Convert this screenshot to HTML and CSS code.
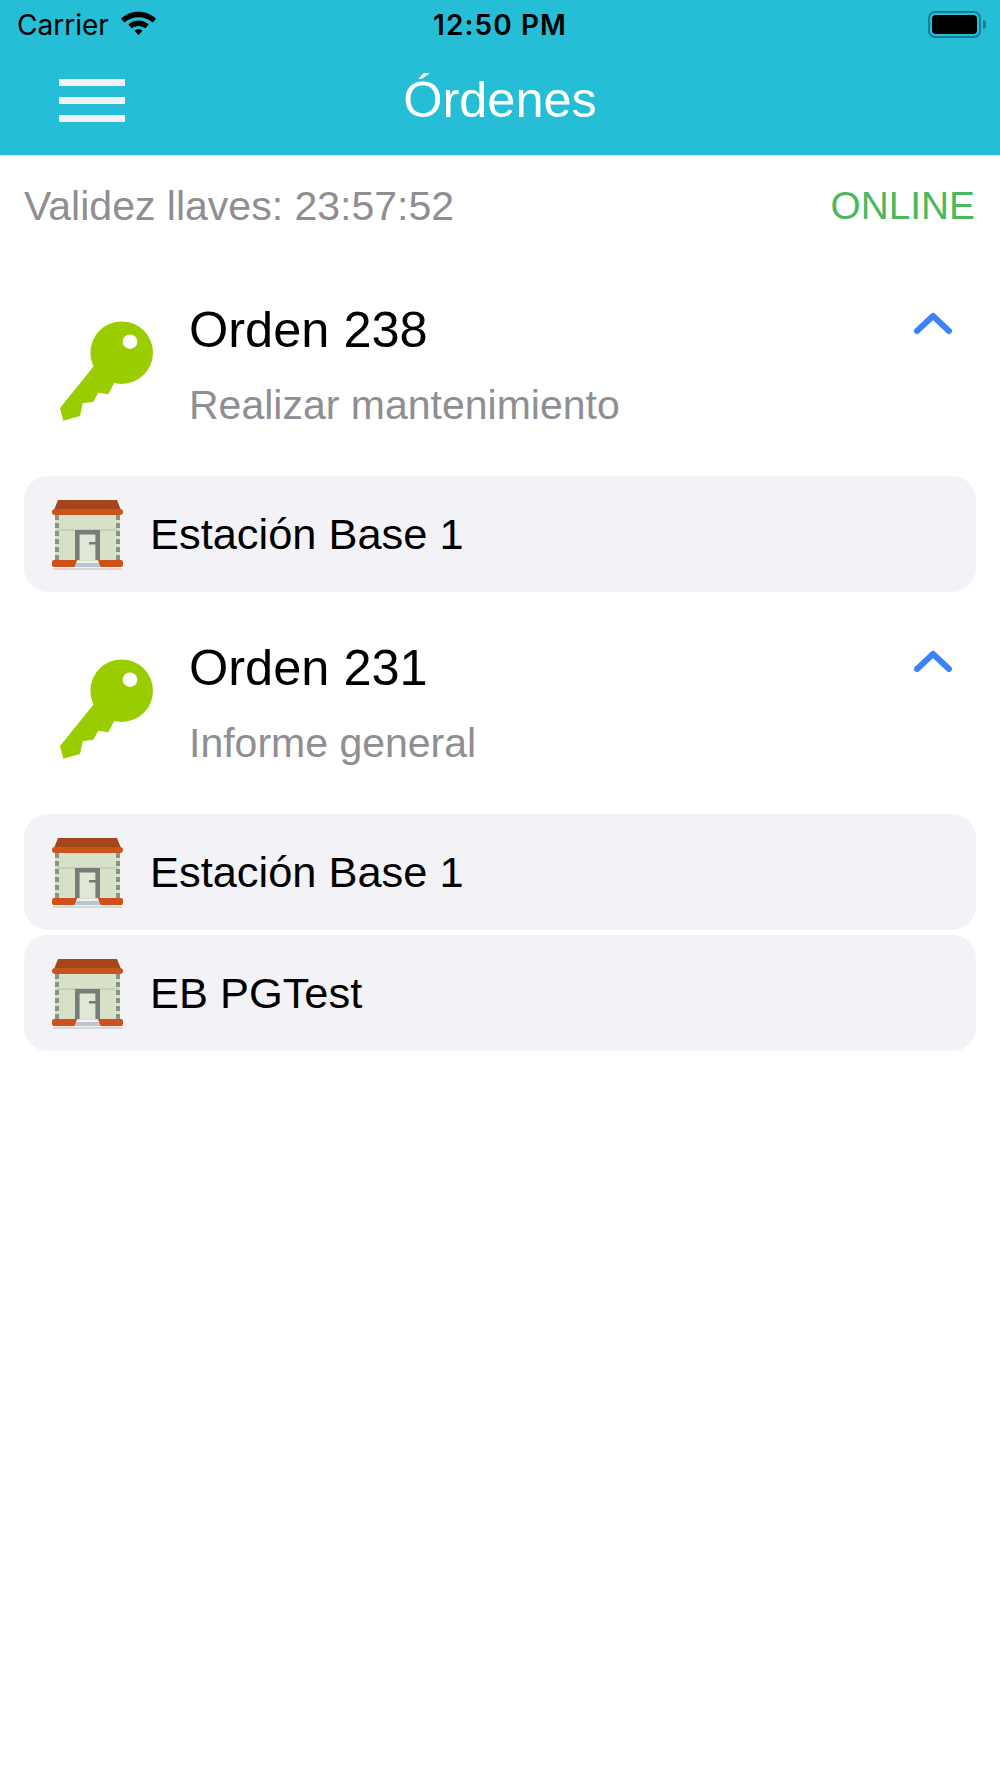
FILE: index.html
```html
<!DOCTYPE html>
<html lang="es">
<head>
<meta charset="utf-8">
<title>Órdenes</title>
<link rel="stylesheet" href="styles.css">
</head>
<body>
<svg class="defs" width="0" height="0" aria-hidden="true">
  <defs>
    <symbol id="key" viewBox="0 -1 94 101">
      <path fill="#9acd00" d="M61.700 -0.600A31.300 31.300 0 1 1 61.700 62A31.300 31.300 0 1 1 61.700 -0.600ZM33.300 44.700L60 50L54 61.300L48.300 72.300L38.300 70.700L33.300 79.700L22.700 81.300L20 94L3.300 98.700L0 86ZM70 12.400A7.300 7.300 0 1 0 70 27A7.300 7.300 0 1 0 70 12.400Z"/>
    </symbol>
    <symbol id="house" viewBox="0 0 76 76">
      <rect x="7" y="17" width="65" height="48" fill="#d6e1c8"/>
      <rect x="9" y="33" width="61" height="2" fill="#c3d0b4"/>
      <path d="M9 19v45M70 19v45" stroke="#8d9282" stroke-width="4" stroke-dasharray="5 3"/>
      <path d="M10 4H69L73 14H6Z" fill="#a5451b"/>
      <rect x="4" y="13" width="71" height="6" rx="3" fill="#c9551d"/>
      <path d="M29.300 64V36.300H49.700V64" fill="#dfe8d6" stroke="#767c78" stroke-width="4.600"/>
      <rect x="41" y="46" width="7" height="2.500" fill="#767c78"/>
      <path d="M6 64H29L27 71H6Q4 71 4 69V66Q4 64 6 64ZM50 64H73Q75 64 75 66V69Q75 71 73 71H52Z" fill="#cf5119"/>
      <path d="M29 67H50L53 71H26Z" fill="#b7c6d2"/>
      <rect x="5" y="72" width="69" height="2" fill="#d8d8d8"/>
    </symbol>
    <symbol id="chevron" viewBox="0 0 40 24">
      <path d="M4 20L20 5L36 20" fill="none" stroke="#3b82f6" stroke-width="6" stroke-linecap="round" stroke-linejoin="round"/>
    </symbol>
  </defs>
</svg>
<header class="top">
  <div class="status">
    <div class="status-left">
      <span class="carrier">Carrier</span>
      <svg class="wifi" viewBox="0 3 38 26"><path d="M19 4C26 4 32 6.500 37 11L33.500 15C29.500 11.500 24.500 9.500 19 9.500C13.500 9.500 8.500 11.500 4.500 15L1 11C6 6.500 12 4 19 4ZM19 13C23 13 26.500 14.500 29.500 17L26 21C24 19.500 21.500 18.500 19 18.500C16.500 18.500 14 19.500 12 21L8.500 17C11.500 14.500 15 13 19 13ZM19 22C20.500 22 21.800 22.500 23 23.500L19 28L15 23.500C16.200 22.500 17.500 22 19 22Z" fill="#000"/></svg>
    </div>
    <span class="clock">12:50 PM</span>
    <div class="battery"><span class="battery-body"><span class="battery-fill"></span></span><span class="battery-tip"></span></div>
  </div>
  <nav class="nav">
    <button class="menu" aria-label="Menú"><span></span><span></span><span></span></button>
    <h1 class="title">Órdenes</h1>
  </nav>
</header>
<main>
  <div class="validity">
    <span class="timer">Validez llaves: 23:57:52</span>
    <span class="online">ONLINE</span>
  </div>
  <section class="order">
    <div class="order-head">
      <svg class="key"><use href="#key"/></svg>
      <div class="order-text">
        <div class="order-name">Orden 238</div>
        <div class="order-desc">Realizar mantenimiento</div>
      </div>
      <svg class="chevron"><use href="#chevron"/></svg>
    </div>
    <div class="stations">
      <div class="station"><svg class="house"><use href="#house"/></svg><span>Estación Base 1</span></div>
    </div>
  </section>
  <section class="order">
    <div class="order-head">
      <svg class="key"><use href="#key"/></svg>
      <div class="order-text">
        <div class="order-name">Orden 231</div>
        <div class="order-desc">Informe general</div>
      </div>
      <svg class="chevron"><use href="#chevron"/></svg>
    </div>
    <div class="stations">
      <div class="station"><svg class="house"><use href="#house"/></svg><span>Estación Base 1</span></div>
      <div class="station"><svg class="house"><use href="#house"/></svg><span>EB PGTest</span></div>
    </div>
  </section>
</main>
</body>
</html>
```
FILE: styles.css
```css
* { box-sizing: border-box; }
html, body { margin: 0; padding: 0; }
body { width: 1000px; height: 1778px; background: #fff; font-family: "Liberation Sans", Arial, sans-serif; overflow: hidden; }
.defs { display: block; height: 0; }
.top { height: 156px; background: #26bdd7; border-bottom: 1px solid #d9e6ea; }
.status { height: 50px; padding: 0 17px; display: grid; grid-template-columns: 1fr auto 1fr; align-items: center; }
.status-left { display: flex; align-items: center; gap: 11px; }
.carrier { font-family: Inter, "Liberation Sans", sans-serif; font-size: 28px; color: #000; }
.wifi { width: 37px; height: 27px; margin-top: -3px; }
.clock { font-family: Inter, "Liberation Sans", sans-serif; font-weight: 600; font-size: 28px; color: #000; letter-spacing: 1.100px; }
.battery { justify-self: end; display: flex; align-items: center; gap: 2px; margin: -2px -3px 0 0; }
.battery-body { width: 53px; height: 27px; border: 2px solid #1a7f92; border-radius: 7px; padding: 2px; display: block; }
.battery-fill { display: block; height: 100%; background: #000; border-radius: 4px; }
.battery-tip { width: 3px; height: 9px; background: #1a7f92; border-radius: 0 3px 3px 0; }
.nav { height: 105px; display: flex; align-items: center; justify-content: center; position: relative; }
.menu { position: absolute; left: 59px; top: 29px; width: 66px; height: 43px; padding: 0; border: 0; background: none; display: flex; flex-direction: column; justify-content: space-between; }
.menu span { display: block; height: 7px; background: #f2f2fb; }
.title { margin: -6px 0 0; font-weight: 400; font-size: 50.500px; color: #fff; }
.validity { display: flex; justify-content: space-between; align-items: center; padding: 0 25px 0 24px; height: 100px; font-size: 41px; }
.timer { color: #8e8e93; }
.online { color: #4cb85c; font-size: 38.800px; }
.order { display: block; }
.order-head { height: 220px; display: flex; align-items: flex-start; position: relative; padding: 0 24px; }
.key { width: 94px; height: 101px; margin: 65px 0 0 36px; flex: none; }
.order-text { margin-left: 35px; }
.order-name { font-size: 50.500px; color: #000; line-height: 60px; margin-top: 44px; }
.order-desc { font-size: 41px; color: #8e8e93; line-height: 50px; margin-top: 20px; }
.chevron { position: absolute; right: 47px; top: 55px; width: 40px; height: 24px; }
.stations { display: flex; flex-direction: column; gap: 5px; padding: 0 24px; margin-bottom: 2px; }
.station { height: 116px; background: #f2f2f7; border-radius: 24px; display: flex; align-items: center; padding-left: 24px; font-size: 43.400px; color: #000; }
.house { width: 76px; height: 76px; flex: none; margin-right: 26px; filter: blur(.7px); }
```
